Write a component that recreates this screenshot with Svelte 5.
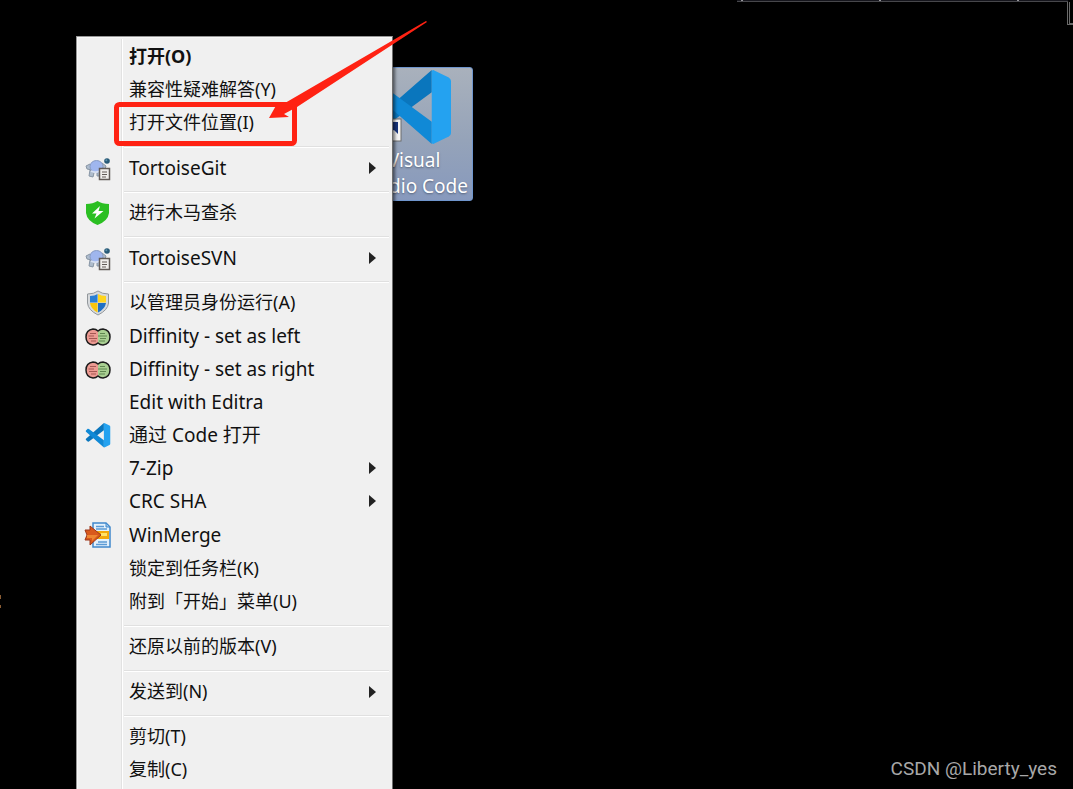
<script>
  const items = [
    { label: "打开(O)", bold: true },
    { label: "兼容性疑难解答(Y)" },
    { label: "打开文件位置(I)" },
    { sep: true },
    { label: "TortoiseGit", latin: true, icon: "tortoise", sub: true },
    { sep: true },
    { label: "进行木马查杀", icon: "guard" },
    { sep: true },
    { label: "TortoiseSVN", latin: true, icon: "tortoise", sub: true },
    { sep: true },
    { label: "以管理员身份运行(A)", icon: "uac" },
    { label: "Diffinity - set as left", latin: true, icon: "diff" },
    { label: "Diffinity - set as right", latin: true, icon: "diff" },
    { label: "Edit with Editra", latin: true },
    { label: "通过 Code 打开", latin: true, icon: "code" },
    { label: "7-Zip", latin: true, sub: true },
    { label: "CRC SHA", latin: true, sub: true },
    { label: "WinMerge", latin: true, icon: "merge", tall: true },
    { label: "锁定到任务栏(K)" },
    { label: "附到「开始」菜单(U)" },
    { sep: true },
    { label: "还原以前的版本(V)" },
    { sep: true },
    { label: "发送到(N)", sub: true },
    { sep: true },
    { label: "剪切(T)" },
    { label: "复制(C)" },
  ];
</script>

{#snippet vscode()}
  <path d="M1 64 Q-1 67 1 69 L8 76 Q10 78 13 75 L74 30 V0 Z" fill="#0a76bd" />
  <path d="M1 36 Q-1 33 1 31 L8 24 Q10 22 13 25 L74 70 V100 Z" fill="#1089d6" />
  <path d="M76 0 L97 10 Q100 12 100 15 V85 Q100 88 97 90 L76 100 Q74 100 74 97 V3 Q74 0 76 0 Z" fill="#24a2f0" />
{/snippet}

<main class="desktop">
  <div class="window-edge"><i></i><i></i><i></i></div>
  <div class="window-corner"></div>
  <div class="left-edge"></div>

  <button class="shortcut">
    <svg class="logo" viewBox="0 0 100 100" aria-hidden="true">
      {@render vscode()}
    </svg>
    <svg class="link" viewBox="0 0 24 24" aria-hidden="true">
      <rect x="1" y="1" width="22" height="22" fill="#f4f4f4" stroke="#6d6d6d" />
      <path d="M8 4 H20 V16 L16 12 Q9 14 8 21 Q2 13 12 8 Z" fill="#17357e" />
    </svg>
    <span>Visual<br />Studio Code</span>
  </button>

  <ul class="menu" role="menu">
    {#each items as item}
      {#if item.sep}
        <li class="sep" role="separator"></li>
      {:else}
        <li role="none">
          <button
            class="item"
            class:bold={item.bold}
            class:latin={item.latin}
            class:tall={item.tall}
            role="menuitem"
          >
            <span class="icon">
              {#if item.icon === "tortoise"}
                <svg viewBox="0 0 26 26" aria-hidden="true">
                  <path d="M1 11 L5 9 L8 12 L7 15 L2 14 Z M5 15 L9 18 L8 22 L4 21 Z M17 8 L21 11 L20 14 L16 12 Z M12 18 L15 17 V21 L12 21 Z" fill="#aebccc" stroke="#8795a4" />
                  <ellipse cx="11.500" cy="11.500" rx="6.500" ry="6" fill="#9fb6ee" stroke="#879bc4" />
                  <path d="M6 16 Q11 19 17 15" fill="none" stroke="#d6dff2" stroke-width="2" />
                  <circle cx="22" cy="6" r="2.800" fill="#285a77" />
                  <circle cx="21.300" cy="5.300" r="1" fill="#5d91ad" />
                  <rect x="14.500" y="13.500" width="10" height="11" fill="#f0eeeb" stroke="#625b57" stroke-width="1.500" />
                  <path d="M17 17 H22 M17 19.500 H22 M17 22 H21" stroke="#625b57" />
                </svg>
              {:else if item.icon === "guard"}
                <svg viewBox="0 0 26 26" aria-hidden="true">
                  <path d="M12.500 1 Q17 4 24 4 V13 Q23 21 12.500 25 Q2 21 1 13 V4 Q8 4 12.500 1 Z" fill="#2bbf22" />
                  <path d="M15 6 L7 13.500 H11.500 L9.500 18.500 L18.500 11 H13.500 Z" fill="#fff" />
                </svg>
              {:else if item.icon === "uac"}
                <svg viewBox="0 0 26 26" aria-hidden="true">
                  <path d="M13 1 Q17 4 23.500 4 V13 Q23 20 13 25 Q3 20 2.500 13 V4 Q9 4 13 1 Z" fill="#d7dadd" stroke="#92979b" />
                  <path d="M12.500 4 V12.500 H5 V6 Q10 6 12.500 4 Z" fill="#2b7fd3" />
                  <path d="M13 4 Q16 6 21 6 V12.500 H13 Z" fill="#ffd51e" />
                  <path d="M5 13 H12.500 V22.500 Q6 19 5 13 Z" fill="#f8c50c" />
                  <path d="M13 13 H21 Q20 19 13 22.500 Z" fill="#1f6fc4" />
                </svg>
              {:else if item.icon === "diff"}
                <svg viewBox="0 0 26 26" aria-hidden="true">
                  <path d="M13 8 Q11 6 8 6 Q1 7 1 14 Q1 21 8 22 Q11 22 13 20 Z" fill="#ec9a92" />
                  <path d="M13 8 Q15 6 18 6 Q25 7 25 14 Q25 21 18 22 Q15 22 13 20 Z" fill="#a9cf92" />
                  <path d="M13 8 Q11 6 8 6 Q1 7 1 14 Q1 21 8 22 Q11 22 13 20 Q15 22 18 22 Q25 21 25 14 Q25 7 18 6 Q15 6 13 8 Z" fill="none" stroke="#1c1c1c" stroke-width="1.500" />
                  <path d="M5 10.500 H11 M3.500 13 H9 M4 15.500 H12 M6 18 H11" stroke="#a45853" />
                  <path d="M15 10.500 H20 M13 13 H22 M15 15.500 H21 M14 18 H20" stroke="#5f8650" />
                </svg>
              {:else if item.icon === "code"}
                <svg viewBox="-3 -4 106 106" aria-hidden="true">
                  {@render vscode()}
                </svg>
              {:else if item.icon === "merge"}
                <svg class="wide" viewBox="0 0 28 28" aria-hidden="true">
                  <path d="M9 2 H22 L26 6 V26 H9 Z" fill="#e4f1fb" stroke="#4088cc" stroke-width="1.500" />
                  <path d="M22 2 V6 H26 Z" fill="#9cc8ec" stroke="#4088cc" />
                  <path d="M12 5.500 H20 M12 8 H23 M14 21 H23 M12 23.500 H23" stroke="#5b9bd5" stroke-width="1.500" />
                  <rect x="12" y="10" width="13" height="8" fill="#f3a90c" />
                  <rect x="17" y="12" width="6" height="3" fill="#ffe36a" />
                  <path d="M1 9 H6 V5 L17 14 L6 24 V19 H1 L3 14 Z" fill="#d9591c" stroke="#9d371b" />
                  <path d="M3 14 H14 L8 20 V17 H3 Z" fill="#ee8632" />
                </svg>
              {/if}
            </span>
            <span class="label">{item.label}</span>
            {#if item.sub}
              <svg class="arrow" viewBox="0 0 7 12" aria-hidden="true">
                <path d="M0 0 L7 6 L0 12 Z" fill="#222" />
              </svg>
            {/if}
          </button>
        </li>
      {/if}
    {/each}
  </ul>

  <svg class="marks" viewBox="0 0 320 130" aria-hidden="true">
    <rect x="6.500" y="84.500" width="178" height="39" rx="3" fill="none" stroke="#ff2213" stroke-width="5" />
    <path d="M316 1 L317 2 L187 87 L174 94 L179 97 L159 98 L168 82 L175 83 Z" fill="#ff2213" />
  </svg>

  <p class="watermark">CSDN @Liberty_yes</p>
</main>

<style>
  :global(body) {
    background: #000;
  }

  .desktop {
    position: relative;
    height: 100vh;
    overflow: hidden;
    background: #000;
    font-family: "Noto Sans", "Noto Sans CJK SC", sans-serif;
    font-size: 18px;
  }

  button {
    margin: 0;
    padding: 0;
    border: 0;
    background: none;
    font: inherit;
    color: inherit;
  }

  .window-edge {
    position: absolute;
    top: 0;
    right: 5px;
    width: 331px;
    height: 2px;
    display: flex;
    gap: 136px;
    padding-left: 4px;
    box-sizing: border-box;
    background: #15151c;
    border-bottom: 1px solid #47474b;
  }

  .window-edge i {
    width: 2px;
    background: #96969a;
  }

  .window-corner {
    position: absolute;
    top: 2px;
    right: 0;
    width: 3px;
    height: 21px;
    border-left: 3px double #6a6a6a;
    border-bottom: 2px solid #6a6a6a;
  }

  .left-edge {
    position: absolute;
    left: 0;
    top: 595px;
    width: 1px;
    height: 6px;
    border-top: 4px solid #8a5c33;
    border-bottom: 3px solid #8a5c33;
  }

  .shortcut {
    position: absolute;
    left: 355px;
    top: 67px;
    width: 118px;
    padding: 2px 0 1px;
    border: 1px solid #6f95cc;
    border-radius: 3px;
    background: linear-gradient(#a9b1bc, #95a3b9 55%, #8799bd);
    color: #fff;
    font-size: 19px;
    line-height: 26px;
    text-align: center;
    text-shadow: 0 1px 2px #56637a;
  }

  .logo {
    display: block;
    width: 74px;
    height: 74px;
    margin: 0 auto 3px;
  }

  .link {
    position: absolute;
    left: 22px;
    top: 50px;
    width: 24px;
    height: 24px;
  }

  .shortcut span {
    display: block;
    white-space: nowrap;
  }

  .menu {
    position: absolute;
    left: 76px;
    top: 36px;
    bottom: -1px;
    width: 317px;
    box-sizing: border-box;
    margin: 0;
    padding: 3px 3px 3px 2px;
    list-style: none;
    border: 1px solid #979797;
    border-right-color: #6e6e6e;
    background: linear-gradient(90deg, #e2e2e2 1px, #fff 1px, #fff 2px, transparent 2px) 44px 2px / 2px 100% no-repeat #f0f0f0;
    box-shadow: inset 1px 1px #f8f8f8, 2px 2px 3px #0008;
    color: #111;
  }

  .item {
    display: flex;
    align-items: center;
    width: 100%;
    height: 33px;
    text-align: left;
    white-space: nowrap;
  }

  .tall {
    height: 35px;
  }

  .bold {
    font-weight: bold;
  }

  .icon {
    display: flex;
    justify-content: center;
    width: 38px;
    margin-right: 12px;
  }

  .icon svg {
    width: 26px;
    height: 26px;
  }

  .icon .wide {
    width: 28px;
    height: 28px;
  }

  .label {
    flex: 1;
    padding-bottom: 2px;
    line-height: 26px;
  }

  .latin {
    font-size: 19px;
  }

  .latin .label {
    padding-bottom: 0;
  }

  .arrow {
    width: 7px;
    height: 12px;
    margin-right: 13px;
  }

  .sep {
    height: 1px;
    margin: 7px 0 3px 45px;
    border-top: 1px solid #e0e0e0;
    background: #fff;
  }

  .marks {
    position: absolute;
    left: 110px;
    top: 20px;
    width: 320px;
    height: 130px;
  }

  .watermark {
    position: absolute;
    right: 16px;
    bottom: 7px;
    margin: 0;
    font-family: Roboto, sans-serif;
    font-size: 19px;
    line-height: 26px;
    color: #a8a8a8;
  }
</style>
